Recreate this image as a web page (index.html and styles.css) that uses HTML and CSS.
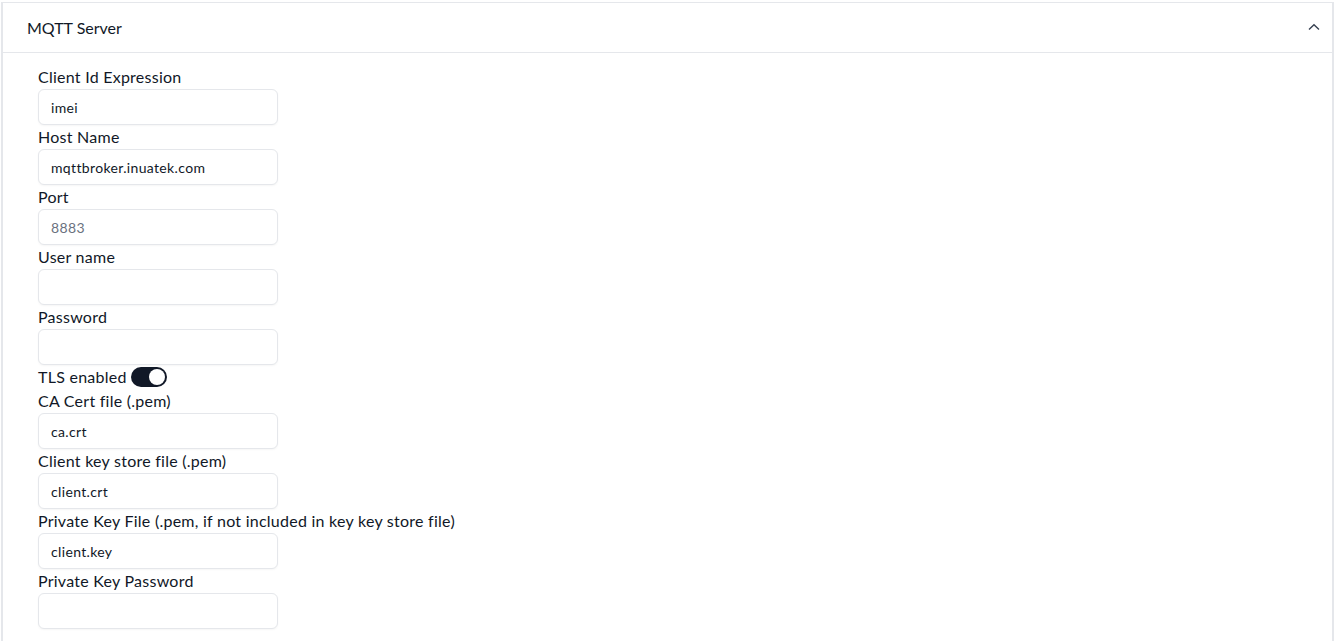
FILE: index.html
```html
<!DOCTYPE html>
<html>
<head>
<meta charset="utf-8">
<link rel="stylesheet" href="styles.css">
</head>
<body>
<div class="accordion">
  <div class="acc-header">
    <span class="acc-title">MQTT Server</span>
    <svg class="chevron" width="12" height="8" viewBox="0 0 12 8"><path d="M1 6.5 L6 1.8 L11 6.5" fill="none" stroke="#374151" stroke-width="1.4"/></svg>
  </div>
  <div class="acc-body">
    <div class="field">
      <label class="label">Client Id Expression</label>
      <input class="input" type="text" value="imei">
    </div>
    <div class="field">
      <label class="label">Host Name</label>
      <input class="input" type="text" value="mqttbroker.inuatek.com">
    </div>
    <div class="field">
      <label class="label">Port</label>
      <input class="input" type="text" placeholder="8883">
    </div>
    <div class="field">
      <label class="label">User name</label>
      <input class="input" type="text">
    </div>
    <div class="field">
      <label class="label">Password</label>
      <input class="input" type="password">
    </div>
    <div class="toggle-row">
      <span class="label">TLS enabled</span>
      <span class="switch"><span class="knob"></span></span>
    </div>
    <div class="field">
      <label class="label">CA Cert file (.pem)</label>
      <input class="input" type="text" value="ca.crt">
    </div>
    <div class="field">
      <label class="label">Client key store file (.pem)</label>
      <input class="input" type="text" value="client.crt">
    </div>
    <div class="field">
      <label class="label">Private Key File (.pem, if not included in key key store file)</label>
      <input class="input" type="text" value="client.key">
    </div>
    <div class="field">
      <label class="label">Private Key Password</label>
      <input class="input" type="password">
    </div>
  </div>
</div>
</body>
</html>
```
FILE: styles.css
```css
html, body {
  margin: 0;
  padding: 0;
  background: #ffffff;
  font-family: "Lato", "Noto Sans", sans-serif;
  color: #111827;
  overflow: hidden;
}
.accordion {
  box-sizing: border-box;
  margin: 2px 1px 0 1px;
  height: 639px;
  overflow: hidden;
  border: 1px solid #e5e7eb;
  border-left-width: 2px;
  border-right-width: 2px;
  border-bottom: none;
}
.acc-header {
  height: 49px;
  display: flex;
  align-items: center;
  justify-content: space-between;
  padding: 0 12px 0 24px;
  border-bottom: 1px solid #e5e7eb;
}
.acc-title {
  font-size: 16px;
  color: #111827;
}
.chevron {
  display: block;
  margin-top: -2px;
}
.acc-body {
  padding: 12px 35px;
  display: flex;
  flex-direction: column;
}
.field {
  display: flex;
  flex-direction: column;
  align-items: flex-start;
}
.label {
  display: block;
  font-size: 16px;
  line-height: 24px;
  height: 24px;
  letter-spacing: 0.25px;
  color: #111827;
}
.input {
  box-sizing: border-box;
  width: 240px;
  height: 36px;
  margin: 0;
  padding: 0 12px;
  border: 1px solid #e5e7eb;
  border-radius: 6px;
  background: #ffffff;
  font-family: "Lato", "Noto Sans", sans-serif;
  font-size: 14px;
  letter-spacing: 0.35px;
  color: #111827;
  box-shadow: 0 1px 2px rgba(0,0,0,0.04);
  outline: none;
}
.input::placeholder {
  color: #6b7280;
}
.toggle-row {
  display: flex;
  align-items: center;
  gap: 4px;
  height: 24px;
}
.switch {
  width: 36px;
  height: 20px;
  border-radius: 10px;
  background: #111827;
  position: relative;
  display: inline-block;
}
.knob {
  position: absolute;
  top: 2px;
  right: 2px;
  width: 16px;
  height: 16px;
  border-radius: 50%;
  background: #ffffff;
}
```
